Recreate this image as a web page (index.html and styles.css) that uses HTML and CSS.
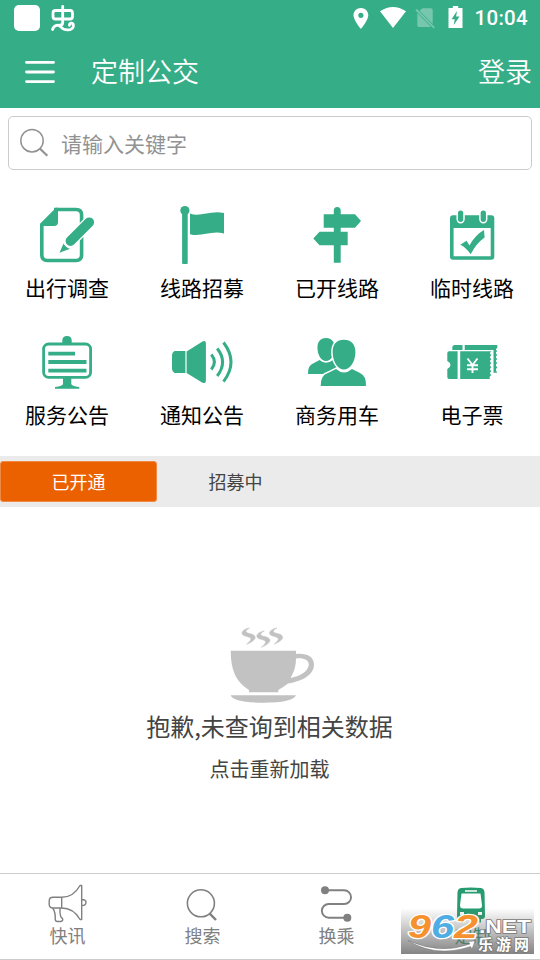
FILE: index.html
```html
<!DOCTYPE html>
<html lang="zh-CN">
<head>
<meta charset="utf-8">
<title>定制公交</title>
<link rel="stylesheet" href="styles.css">
</head>
<body>
<div class="app">
  <header class="header">
    <div class="status">
      <svg width="90" height="36" viewBox="0 0 90 36" fill="none" stroke="#fff" stroke-width="2.800" stroke-linecap="round" stroke-linejoin="round">
        <rect x="14" y="5" width="26" height="26" rx="5" fill="#fff" stroke="none"/>
        <rect x="53" y="10.500" width="19.500" height="8.500" rx="2.500"/>
        <path d="M62.700 6.500V22.500Q62.700 25 60.500 25M52.500 29.500C54 25 58.500 24 61 27C63.500 30.500 72 31.500 73.300 26.500C74 22.500 69 22 69.500 25.300"/>
      </svg>
      <div class="status-right">
        <svg width="130" height="36" viewBox="344.500 0 130 36" fill="#fff">
          <path fill-rule="evenodd" d="M361.400 8C357.200 8 354 11.200 354 15.300C354 20.500 361.400 29 361.400 29S368.800 20.500 368.800 15.300C368.800 11.200 365.600 8 361.400 8ZM361.400 12.700A2.600 2.600 0 1 1 361.400 17.900A2.600 2.600 0 0 1 361.400 12.700Z"/>
          <path d="M380.500 11.300Q393.500 2.500 406.500 11.300L393.500 28Z"/>
          <g opacity=".32"><path d="M423 8.300H431.500Q433.200 8.300 433.200 10V24L420 10.800ZM417.800 13L431.500 27H419.500Q417.800 27 417.800 25.500Z"/><path d="M416.500 9.500L434.800 27.800" stroke="#fff" stroke-width="1.800"/></g>
          <path fill-rule="evenodd" d="M453.300 6H458.700V8H463V28H449V8H453.300ZM457.500 11L452 19.200H455.200L454.300 25L460 16.500H456.600Z"/>
        </svg>
        <span class="clock">10:04</span>
      </div>
    </div>
    <div class="titlebar">
      <svg class="menu" width="30" height="24" viewBox="0 0 30 24" stroke="#fff" stroke-width="2.800" stroke-linecap="round"><path d="M1.500 2.400H28.500M1.500 12H28.500M1.500 21.600H28.500"/></svg>
      <h1 class="title">定制公交</h1>
      <span class="login">登录</span>
    </div>
  </header>

  <div class="search">
    <svg width="30" height="30" viewBox="19 128 30 30" fill="none" stroke="#929292"><circle cx="32" cy="140.700" r="11.200" stroke-width="1.500"/><path d="M39.800 148.500L47.300 155.800" stroke-width="2.200"/></svg>
    <span class="placeholder">请输入关键字</span>
  </div>

  <main class="grid">
    <div class="cell">
      <svg class="pic" viewBox="0 200 135 68">
        <path d="M54 209.500H76Q81.600 209.500 81.600 215V255Q81.600 260.500 76 260.500H47.300Q41.800 260.500 41.800 255V224" fill="none" stroke="#35ad87" stroke-width="3.600"/>
        <path d="M56 207.700H58V222Q58 226 54 226H40V223.800Z"/>
        <g fill="none" stroke-linecap="round"><path d="M70.500 241L89.200 222.300" stroke="#fff" stroke-width="12.500"/><path d="M70.500 241L89.200 222.300" stroke="#35ad87" stroke-width="9.800"/></g>
        <path d="M59.500 252.700L63.500 243.500Q65.500 247.500 70 248.700Z"/>
      </svg><span class="label">出行调查</span>
    </div>
    <div class="cell">
      <svg class="pic" viewBox="135 200 135 68">
        <circle cx="184.900" cy="210.500" r="4.600"/><rect x="182.100" y="211" width="5.600" height="53" rx="1"/>
        <path d="M190 213.500C200 217.500 210 210 224 213V233.500C211 230 201 237.500 190 234.200Z"/>
      </svg><span class="label">线路招募</span>
    </div>
    <div class="cell">
      <svg class="pic" viewBox="270 200 135 68">
        <path d="M333.800 262.700V210.500Q333.800 207 337.200 207T340.700 210.500V262.700Z"/>
        <path d="M323.700 214.300H355L361 221L355 227.800H323.700ZM347.700 231.700H319.500L313.300 238.500L319.500 245.300H347.700Z"/>
      </svg><span class="label">已开线路</span>
    </div>
    <div class="cell">
      <svg class="pic" viewBox="405 200 135 68">
        <path fill-rule="evenodd" d="M453 215.300H491.300Q494.300 215.300 494.300 218.300V256.700Q494.300 259.700 491.300 259.700H453Q450 259.700 450 256.700V218.300Q450 215.300 453 215.300ZM453.600 228V256.300H490.700V228Z"/>
        <g stroke="#fff" stroke-width="1.500"><rect x="457.200" y="209.700" width="6.800" height="13" rx="3.400"/><rect x="479.900" y="209.700" width="6.800" height="13" rx="3.400"/></g>
        <path d="M460.300 244.800L466.500 240.800L469.500 245.500Q475 235 484 230L484.600 237.500Q476 243.500 470.700 254.300Q466 247.500 460.300 244.800Z"/>
      </svg><span class="label">临时线路</span>
    </div>
    <div class="cell">
      <svg class="pic" viewBox="0 327 135 68">
        <path d="M62.300 343V340.500Q62.300 336 67 336T71.700 340.500V343ZM63 378H71.300V384Q71.500 386 79.300 387V388.800H55V387Q62.800 386 63 384Z"/>
        <rect x="43.600" y="344" width="47" height="33.300" rx="5" fill="none" stroke="#35ad87" stroke-width="2.800"/>
        <path d="M48.300 353.600H75M48.300 362H86.500M48.300 370.600H86.500" stroke="#35ad87" stroke-width="3.800"/>
      </svg><span class="label">服务公告</span>
    </div>
    <div class="cell">
      <svg class="pic" viewBox="135 327 135 68">
        <path d="M185.400 351H174.500Q172 352.500 172 355V369Q172 371.500 174.500 373H185.400ZM186.600 351.500L202.500 341.500Q205.900 340 205.900 343.500V380.500Q205.900 384 202.500 382.700L186.600 373Z"/>
        <path d="M211.300 354.500Q217.500 362 211.300 369.500M217.200 348.500Q228 362 217.200 376M223.500 342.500Q238.500 362 223.500 381.700" fill="none" stroke="#35ad87" stroke-width="3"/>
      </svg><span class="label">通知公告</span>
    </div>
    <div class="cell">
      <svg class="pic" viewBox="270 327 135 68">
        <path d="M326 338C320 338 317.200 342.500 317.500 348.500C317.800 355 321 361 326 361S334.500 355 334.800 348.500C335 342.500 332 338 326 338ZM308 374Q307.700 365 314 363L319.500 360Q326 365.500 333 360L342 374Z"/>
        <path d="M343.900 339.700C335.500 339.700 332.300 345.500 332.700 353C333 362 338 369.500 343.900 369.500S355 362 355.400 353C355.700 345.500 352.300 339.700 343.900 339.700ZM320.700 386Q320.500 375 328 373L336 369Q344 376 352 369L360 373Q366.500 376 366 386Z" stroke="#fff" stroke-width="3" paint-order="stroke"/>
      </svg><span class="label">商务用车</span>
    </div>
    <div class="cell">
      <svg class="pic" viewBox="405 327 135 68">
        <path d="M452.300 350V347.500Q452.300 345 454.800 345H462.500V350ZM464.700 345H497.300V348Q494.500 349.200 497.300 351Q494.500 353 497.300 355Q494.500 357 497.300 359Q494.500 361 497.300 363Q494.500 365 497.300 367.500Q494.500 369 497.300 372.800H493.500V350H464.700Z"/>
        <path d="M457.600 351.300H449Q447.300 351.300 447.300 353V361Q450.500 362.500 450.500 365T447.300 369V377Q447.300 379 449 379H457.600ZM460.200 351.300H491.500Q488.500 353.500 491.500 355Q488.500 357.500 491.500 359Q488.500 361.500 491.500 363Q488.500 365.500 491.500 367Q488.500 369.500 491.500 371Q488.500 373.500 491.500 375Q488.500 377 490 379H460.200Z"/>
        <path d="M467.500 358.500L472.500 365L477.500 358.500M472.500 365V373M467 365.300H478M467 369.300H478" fill="none" stroke="#fff" stroke-width="1.900"/>
      </svg><span class="label">电子票</span>
    </div>
  </main>

  <div class="tabs"><span class="tab active">已开通</span><span class="tab">招募中</span></div>

  <section class="empty">
    <svg width="90" height="78" viewBox="227 626 90 78" fill="#c2c2c2">
      <path d="M230.700 650.700H296V654C307 653 314 657 314 664.500C314 673 306 680.500 288 683.500Q282 688 278.300 690V692.300H249V690C236 682 230.700 670 230.700 650.700ZM296 658.500Q296 669 290.500 678C301 676 308.800 670.500 308.800 664.500C308.800 659.500 303 657.500 296 658.500ZM230.700 695.200H296C294 700 283 702.700 263.300 702.700S232 700 230.700 695.200Z" fill-rule="evenodd"/>
      <path id="steam" d="M249.500 627.900C243 629 240 633 243.500 635.300C247.500 637.500 256 636.800 246.500 644.300C258.500 639.500 256.500 635 250 633.600C245.500 632.600 244 631 249.500 627.900Z" stroke="#c2c2c2" stroke-width=".5"/>
      <use href="#steam" x="14.800" y="3"/><use href="#steam" x="27.500"/>
    </svg>
    <p class="empty-title">抱歉,未查询到相关数据</p>
    <p class="empty-link">点击重新加载</p>
  </section>

  <nav class="nav">
    <div class="nav-item">
      <svg class="nav-pic" viewBox="0 880 135 44" fill="none" stroke="#808080" stroke-width="1.400" stroke-linejoin="round"><path d="M61.700 897.300H53Q49.200 897.300 49.200 901V904.300Q49.200 908 53 908H61.700ZM61.700 897.300C69 897.300 75 894.500 80 885.500H81.700V919.500H80C75 910.500 69 908 61.700 908M82 899.500Q86 899.500 86 902.500T82 905.500M52.700 908Q55.500 912 55.300 919.500Q55.300 921.500 57.500 921.500H60.500Q63.500 921 62.500 918.500Q59.500 917 60 908"/></svg>
      <span>快讯</span>
    </div>
    <div class="nav-item">
      <svg class="nav-pic" viewBox="135 880 135 44" fill="none" stroke="#808080"><circle cx="200.900" cy="903.300" r="13.500" stroke-width="1.600"/><path d="M209.700 913.700L216 920" stroke-width="2.400"/></svg>
      <span>搜索</span>
    </div>
    <div class="nav-item transfer">
      <svg class="nav-pic" viewBox="269 880 135 44" fill="none" stroke="#808080" stroke-width="1.900"><path d="M325 890.300H344.200A6.850 6.850 0 0 1 344.200 904H328.700A6.850 6.850 0 0 0 328.700 917.700H347"/><g fill="#808080" stroke="none"><circle cx="325" cy="890.300" r="4"/><circle cx="347.300" cy="917.700" r="4"/></g></svg>
      <span>换乘</span>
    </div>
    <div class="nav-item current">
      <svg class="nav-pic" viewBox="405 880 135 44"><path fill="#269b70" fill-rule="evenodd" d="M461 888Q471 886.800 481 888Q484 888.500 484.500 892L485 916Q485 919 482 919H481V922.500H477V919H465V922.500H461V919H460Q457 919 457 916L457.500 892Q458 888.500 461 888ZM465 890.300V891.700H477V890.300ZM461.500 893.500L460 905Q460 908.500 463 908.500H479Q482.300 908.500 482 905L480.500 893.500ZM460 912V915H464V912ZM478 912V915H482V912Z"/></svg>
      <span>定制</span>
    </div>
    <div class="watermark">
      <svg width="133" height="46" viewBox="401 908 133 46">
        <g font-family="Liberation Sans" font-weight="700" font-style="italic" font-size="33" stroke="#fff" stroke-width="2.500" stroke-linejoin="round" paint-order="stroke">
          <text x="408" y="937.500" textLength="23" lengthAdjust="spacingAndGlyphs" fill="#f5922f">9</text><text x="431" y="937.500" textLength="23" lengthAdjust="spacingAndGlyphs" fill="#50ade3">6</text><text x="454" y="937.500" textLength="24" lengthAdjust="spacingAndGlyphs" fill="#f5922f">2</text>
        </g>
        <path d="M408 940.500Q440 955 470 944L468 941.500L475 941L472 949L470.500 946.500Q436 958 408 940.500Z" fill="#fff" stroke="#777" stroke-width=".5"/>
        <g fill="#fff" stroke="#777" stroke-width="1.500" paint-order="stroke" font-weight="700">
          <text x="479" y="932.500" font-family="Liberation Sans" font-size="19" textLength="52" lengthAdjust="spacingAndGlyphs">.NET</text>
          <text x="478" y="949.500" font-family="Noto Sans CJK SC" font-size="15" textLength="51">乐游网</text>
        </g>
      </svg>
    </div>
  </nav>
</div>
</body>
</html>
```
FILE: styles.css
```css
* { box-sizing: border-box; }
body { margin: 0; background: #fff; font-family: "Noto Sans CJK SC", sans-serif; }
svg { display: block; flex: none; }
.app { width: 540px; height: 960px; display: flex; flex-direction: column; overflow: hidden; }

.header { height: 108px; flex: none; background: #35ad87; color: #fff; }
.status { height: 36px; display: flex; justify-content: space-between; }
.status-right { display: flex; padding-right: 12px; }
.clock { font: 500 20.5px/37px Roboto, sans-serif; letter-spacing: .3px; }
.titlebar { height: 72px; padding: 0 8px 0 25px; display: flex; align-items: center; }
.title, .login { margin: 0; padding-bottom: 2px; font-size: 27px; line-height: 40px; font-weight: 350; }
.title { margin-left: 36px; }
.login { margin-left: auto; }

.search { height: 54px; flex: none; margin: 8px 8px 0; padding-left: 10px; display: flex; align-items: center; border: 1px solid #ccc; border-radius: 5px; }
.placeholder { margin-left: 12px; padding-bottom: 1px; font-size: 21px; line-height: 30px; color: #929292; }

.grid { height: 286px; flex: none; padding-top: 30px; display: grid; grid-template-columns: repeat(4, 135px); grid-auto-rows: 127px; }
.cell { display: flex; flex-direction: column; align-items: center; }
.pic { width: 135px; height: 68px; fill: #35ad87; }
.label { margin-top: 4px; padding-right: 1px; font-size: 21px; line-height: 30px; color: #000; }

.tabs { height: 51px; flex: none; padding: 5px 0; display: flex; background: #ebebeb; }
.tab { width: 157px; height: 41px; font-size: 18px; line-height: 41px; text-align: center; color: #444; }
.active { background: #eb6100; border: 1px solid #f08a42; border-radius: 3px; line-height: 39px; color: #fff; }

.empty { flex: 1; padding-top: 119px; display: flex; flex-direction: column; align-items: center; color: #444; }
.empty svg { margin-left: 4px; }
.empty p { margin: 0; padding-right: 1px; }
.empty .empty-title { margin-top: 4px; font-size: 24px; line-height: 36px; }
.empty .empty-link { padding-top: 10px; font-size: 20px; line-height: 30px; }

.nav { position: relative; height: 87px; flex: none; display: grid; grid-template-columns: repeat(4, 135px); border-top: 1px solid #ccc; border-bottom: 1px solid #ccc; }
.nav-item { padding-top: 6px; display: flex; flex-direction: column; align-items: center; font-size: 18px; line-height: 22px; color: #808080; }
.nav-pic { width: 135px; height: 44px; }
.transfer { margin-left: -1px; margin-right: 1px; }
.current { color: #269b70; }
.watermark { position: absolute; left: 401px; top: 34px; width: 133px; height: 46px; background: linear-gradient(rgba(120, 120, 120, 0), rgba(110, 110, 110, .85)); }
```
